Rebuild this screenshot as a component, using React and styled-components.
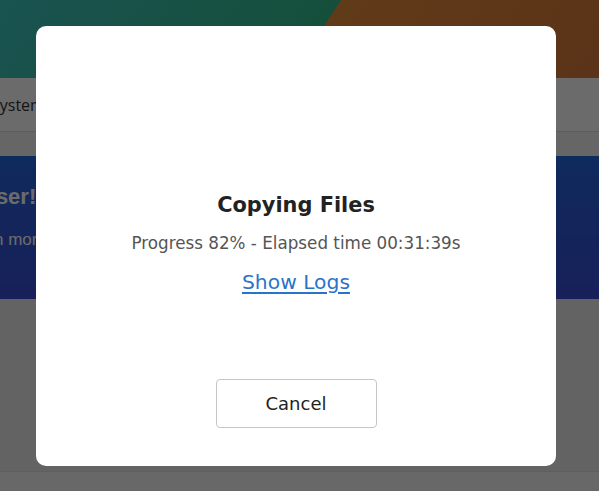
import React from "react";
import styled, { createGlobalStyle } from "styled-components";

const Global = createGlobalStyle`
  html, body { margin: 0; padding: 0; }
  body { width: 599px; height: 491px; overflow: hidden; font-family: "Open Sans", "DejaVu Sans", sans-serif; }
  #root { height: 491px; }
`;

const Page = styled.div`
  position: relative;
  height: 491px;
  display: flex;
  flex-direction: column;
  background: #eeeeee;
  overflow: hidden;
`;

const Hero = styled.header`
  height: 78px;
  flex: none;
  background: linear-gradient(123deg, #3ec6c0 0%, #33bd8e 52.5%, #e68d3a 52.5%, #d97a3a 100%);
`;

const Nav = styled.nav`
  height: 53px;
  flex: none;
  display: flex;
  align-items: center;
  background: #ffffff;
  border-bottom: 1px solid #dcdcdc;
`;

const NavItem = styled.span`
  margin-left: -9px;
  font-size: 16px;
  color: #333;
`;

const Spacer = styled.div`
  height: 24px;
  flex: none;
  background: #f4f4f4;
`;

const Banner = styled.section`
  height: 143px;
  box-sizing: border-box;
  padding-top: 27px;
  flex: none;
  display: flex;
  flex-direction: column;
  gap: 19px;
  background: linear-gradient(180deg, #2466dc 0%, #3a4cd6 100%);
  color: #fff;
`;

const BannerTitle = styled.h2`
  margin: 0 0 0 -20px;
  font-size: 22px;
  font-weight: 700;
  line-height: 28px;
  font-family: "Liberation Sans", Arial, sans-serif;
`;

const BannerText = styled.p`
  margin: 0 0 0 -40px;
  font-size: 17px;
  line-height: 20px;
  font-family: "Liberation Sans", Arial, sans-serif;
`;

const Content = styled.main`
  flex: 1;
  background: #ececec;
`;

const Footer = styled.footer`
  height: 19px;
  flex: none;
  background: #f8f8f8;
  border-top: 1px solid #e2e2e2;
`;

const Overlay = styled.div`
  position: absolute;
  inset: 0;
  background: rgba(0, 0, 0, 0.58);
  display: flex;
  justify-content: center;
  align-items: flex-start;
  padding-top: 26px;
  padding-right: 7px;
`;

const Modal = styled.div`
  width: 520px;
  height: 440px;
  background: #fff;
  border-radius: 10px;
  display: flex;
  flex-direction: column;
  align-items: center;
  font-family: "DejaVu Sans", Verdana, sans-serif;
`;

const Body = styled.div`
  padding-top: 165px;
  display: flex;
  flex-direction: column;
  align-items: center;
`;

const Title = styled.h1`
  margin: 0;
  font-size: 20.9px;
  line-height: 28px;
  font-weight: 700;
  color: #222;
`;

const Progress = styled.p`
  margin: 13px 0 0;
  font-size: 16.75px;
  line-height: 22px;
  color: #555;
`;

const LogsLink = styled.a`
  margin-top: 14px;
  font-size: 20.3px;
  line-height: 28px;
  color: #2b73c9;
  text-decoration: underline;
  text-underline-offset: 3px;
  cursor: pointer;
`;

const Actions = styled.div`
  margin-top: auto;
  padding-bottom: 38px;
`;

const Button = styled.button`
  width: 161px;
  height: 49px;
  border: 1px solid #c6c6c6;
  border-radius: 4px;
  background: #fff;
  font-family: "DejaVu Sans", Verdana, sans-serif;
  font-size: 18px;
  color: #222;
  cursor: pointer;
`;

export default function App() {
  return (
    <>
      <Global />
      <Page>
        <Hero />
        <Nav>
          <NavItem>System</NavItem>
        </Nav>
        <Spacer />
        <Banner>
          <BannerTitle>User!</BannerTitle>
          <BannerText>Learn more</BannerText>
        </Banner>
        <Content />
        <Footer />
        <Overlay>
          <Modal role="dialog" aria-modal="true">
            <Body>
              <Title>Copying Files</Title>
              <Progress>Progress 82% - Elapsed time 00:31:39s</Progress>
              <LogsLink>Show Logs</LogsLink>
            </Body>
            <Actions>
              <Button>Cancel</Button>
            </Actions>
          </Modal>
        </Overlay>
      </Page>
    </>
  );
}
